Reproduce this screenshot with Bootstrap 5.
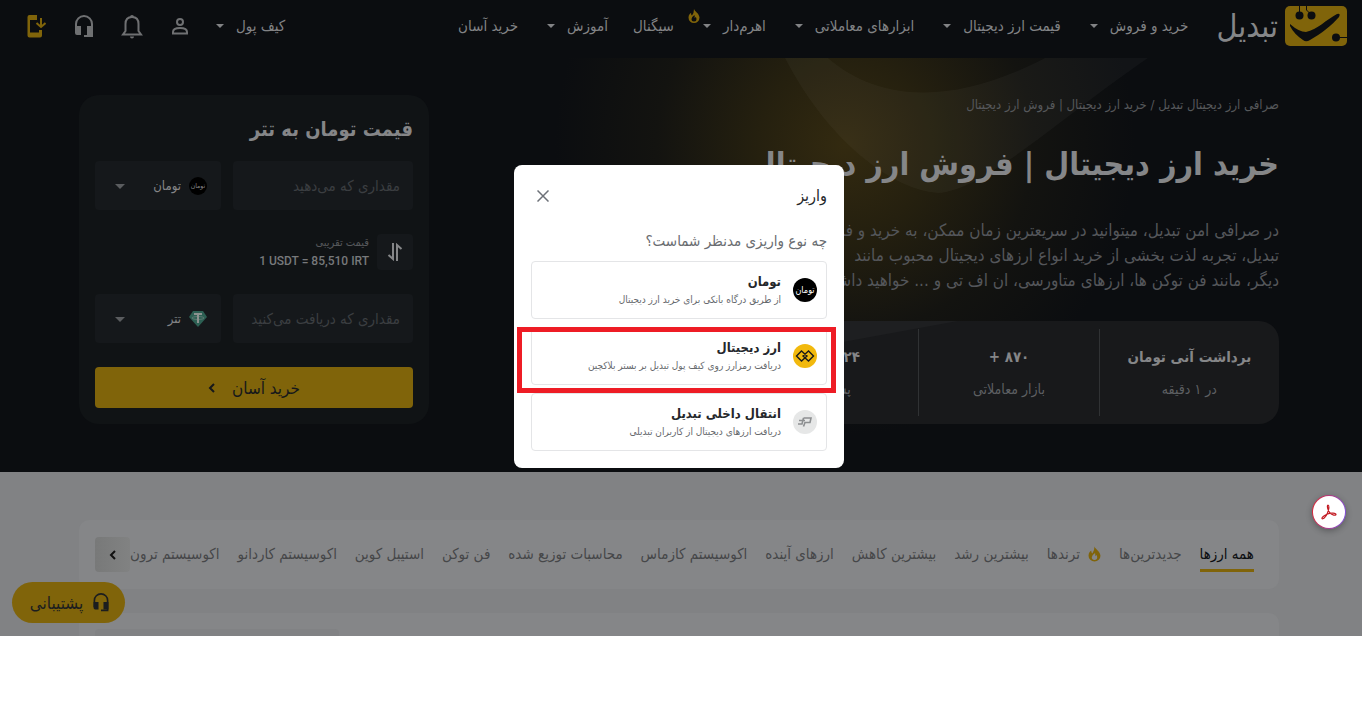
<!doctype html>
<html lang="fa" dir="rtl">
<head>
<meta charset="utf-8">
<meta name="viewport" content="width=device-width, initial-scale=1">
<title>تبدیل</title>
<link href="https://cdn.jsdelivr.net/npm/bootstrap@5.3.0/dist/css/bootstrap.min.css" rel="stylesheet">
<style>
:root{--gold:#80640a;--ink:#0b0d10}
body{font-family:"DejaVu Sans Condensed","DejaVu Sans",Roboto,sans-serif;background:#fff;font-size:15px;line-height:24px}
button,input,select{font-family:inherit}
a{text-decoration:none;color:inherit}
svg{display:block;flex:none}
.stage{background:#818284;overflow:hidden}
.wrap{max-width:1200px;margin:0 auto}
.topbar{background:var(--ink);color:#828385;height:58px;padding:0 15px 6px 24px}
.brand-word{font-size:32px;line-height:40px;color:#858688;margin-right:7px}
.main-menu{margin-right:28px}
.main-menu li{margin-left:29px}
.main-menu .no-caret{margin-left:25px}
.menu-link{display:flex;align-items:center;gap:12px;position:relative;white-space:nowrap}
.caret{width:0;height:0;border:4px solid transparent;border-top-color:currentColor;border-bottom:0}
.flame-tag{position:absolute;left:-15px;top:-5px}
.tool{color:#6f7072;background:none;border:0;padding:0;width:24px;display:flex;justify-content:center}
.tools{gap:24px}
.hero{background:var(--ink);padding:37px 4px 48px 0;isolation:isolate}
.art{position:absolute;top:0;right:0;z-index:-1}
.crumbs{font-size:13px;line-height:20px;color:#56585b}
.headline{font-size:32px;line-height:50px;font-weight:700;color:#858688;margin:24px 0 29px}
.intro{font-size:17px;line-height:25px;color:#54565a;margin:0 0 28px}
.stats{background:#18191b;border-radius:20px;padding:8px 0;width:540px;color:#858688;overflow:hidden;isolation:isolate}
.stat{height:87px;border-left:1px solid #303234;text-align:center;padding-top:16px;flex:1 0 0}
.stat:last-child{border-left:0}
.stat strong{display:block;font-size:15px;margin-bottom:8px}
.stat span{font-size:14px;color:#5e6063}
.trade{width:350px;background:#101315;border-radius:20px;padding:20px 16px 16px;color:#858688}
.trade h2{font-size:20px;line-height:28px;font-weight:700;margin:0 0 18px}
.trade input,.trade select{height:49px;border:0;border-radius:4px;background:#15181b;color:#858688;font-size:15px;width:100%}
.trade input{padding:0 13px}
.trade input::placeholder{color:#3b3e41;opacity:1}
.coin-pick{width:126px;position:relative;flex:none}
.coin-pick select{appearance:none;padding:0 40px 0 30px;font-size:13px}
.coin-mark{position:absolute;right:14px;top:16px;width:18px;height:18px}
.coin-pick .caret{position:absolute;left:20px;top:23px;border-width:5px;border-bottom:0;color:#5a5c5f}
.swap{width:36px;height:36px;border:0;border-radius:4px;background:#15181b;color:#858688;padding:0}
.rate small{font-size:11px;color:#56585b;line-height:18px}
.rate span{font:500 12px/18px Roboto,sans-serif;color:#77797b}
.buy{height:41px;background:var(--gold);color:#16181a;border:0;border-radius:4px;font-size:17px}
.panel{background:#858688}
.lower{padding:48px 4px 0 0;color:#464749}
.tabs-panel{border-radius:10px;padding:16px 25px 16px 16px;height:69px;font-size:15px}
.tab{border:0;background:none;color:inherit;padding:5px 0 3px;line-height:24px;border-bottom:3px solid transparent;white-space:nowrap;height:35px}
.tab.on{color:#0d0f11;border-color:var(--gold)}
.more{width:35px;height:35px;border:0;border-radius:4px;background:linear-gradient(90deg,#787979,#818282);color:#111;padding:0}
.list-panel{border-radius:10px 10px 0 0;height:23px;margin-top:24px;padding:16px 16px 0}
.search-box{width:244px;height:7px;background:#818284;border-radius:4px 4px 0 0}
.support{position:absolute;left:12px;bottom:13px;width:113px;height:41px;border:0;border-radius:21px;background:var(--gold);color:#1b1d1f;font-size:17px;gap:10px;padding:0 12px 0 14px}
.pdf{position:absolute;right:16px;top:495px;width:34px;height:34px;border:1px solid transparent;border-radius:50%;padding:0;background:linear-gradient(#fff,#fff) padding-box,linear-gradient(100deg,#e0232b,#7b52e8) border-box;box-shadow:0 2px 6px rgba(0,0,0,.3)}
.shade{padding:0 4px 3px 0}
.deposit{width:330px;background:#fff;border-radius:8px;padding:16px 17px 17px;color:#25272b}
.deposit h2{font-size:16px;line-height:30px;margin:0;font-weight:500}
.deposit .ask{color:#6a6d71;font-size:15px;line-height:24px;margin:18px 0 8px}
.close-x{border:0;background:none;color:#6d7178;padding:0;width:24px;height:26px}
.choice{height:58px;border:1px solid #e4e5e7;border-radius:4px;background:none;padding:0 9px;gap:12px;color:inherit;position:relative;text-align:right}
.choice b{display:block;font-size:13px;line-height:20px}
.choice span{display:block;font-size:10px;line-height:16px;color:#66696d}
.choice.marked::after{content:"";position:absolute;top:-1px;bottom:-9px;right:-10px;left:-15px;border:5px solid #ee1c25}
</style>
</head>
<body>
<div class="stage position-relative">
  <header class="topbar d-flex align-items-center justify-content-between">
    <div class="d-flex align-items-center">
      <a href="#" class="d-flex align-items-center">
        <svg width="62" height="40" viewBox="0 0 62 40"><rect width="62" height="40" rx="5" fill="#80640a"/><g fill="#0b0d10"><circle cx="14.500" cy="9.500" r="4"/><circle cx="26.500" cy="9.500" r="4"/><circle cx="51" cy="31.500" r="4"/><path d="M5 18Q14 26 21 26C32 24 42 13 52 8Q56 7 54 11C47 19 36 28 25 34Q21 36.500 18 34Q9 28 5 20Z"/></g><path d="M14.500 0v8M21.500 0v4l5 5M51 31.500h11" stroke="#0b0d10" fill="none"/></svg>
        <span class="brand-word">تبدیل</span>
      </a>
      <ul class="main-menu list-unstyled d-flex align-items-center mb-0 p-0">
        <li><a class="menu-link" href="#">خرید و فروش<i class="caret"></i></a></li>
        <li><a class="menu-link" href="#">قیمت ارز دیجیتال<i class="caret"></i></a></li>
        <li><a class="menu-link" href="#">ابزارهای معاملاتی<i class="caret"></i></a></li>
        <li><a class="menu-link" href="#">اهرم‌دار<i class="caret"></i><svg class="flame-tag" width="12" height="14" viewBox="0 0 12 14"><path fill="#80640a" fill-rule="evenodd" d="M6 0C7 3 11 4 11.500 8.500A5.500 5.500 0 0 1 .5 8.500C.5 6 2 4.500 3 4Q3 6 4 6.500Q6 4 6 0ZM6.500 6Q3.500 8 3.500 10A2.500 2.500 0 0 0 8.500 10Q8.500 8.500 7.500 8Q7 9 6.500 9Q7 7.500 6.500 6Z"/></svg></a></li>
        <li class="no-caret"><a class="menu-link" href="#">سیگنال</a></li>
        <li><a class="menu-link" href="#">آموزش<i class="caret"></i></a></li>
        <li><a class="menu-link" href="#">خرید آسان</a></li>
      </ul>
    </div>
    <div class="d-flex align-items-center tools">
      <a class="menu-link" href="#">کیف پول<i class="caret"></i></a>
      <div class="d-flex align-items-center tools">
      <button class="tool" aria-label="حساب کاربری"><svg width="18" height="18" viewBox="0 0 18 18" fill="none" stroke="currentColor" stroke-width="2"><circle cx="9" cy="5" r="3"/><path d="M2 16.500v-1.500c0-3 4-4 7-4s7 1 7 4v1.500Z"/></svg></button>
      <button class="tool" aria-label="اعلان‌ها"><svg width="22" height="25" viewBox="0 0 22 25"><path d="M11 3C6.500 3 4.500 6 4.500 10v7L2 20.500h18L17.500 17v-7C17.500 6 15.500 3 11 3Z" fill="none" stroke="currentColor" stroke-width="2"/><path d="M9 3a2 2 0 1 1 4 0ZM9 22.500h4a2 2 0 0 1-4 0Z" fill="currentColor"/></svg></button>
      <button class="tool" aria-label="پشتیبانی"><svg width="18" height="23" viewBox="0 0 18 23"><path d="M1 17v-8a8 8 0 0 1 16 0v12H9" fill="none" stroke="currentColor" stroke-width="2"/><path d="M0 11h6v9H2q-2 0-2-2ZM12 11h6v9h-6Z" fill="currentColor"/></svg></button>
      <button class="tool" aria-label="دانلود اپلیکیشن"><svg width="19" height="23" viewBox="0 0 19 23"><path d="M10 0v5H3v12.500h9V15h3v5.500q0 2-2 2H2.500q-2 0-2-2V2q0-2 2-2Z" fill="#80640a"/><path d="M14 3v9M9.500 8l4.500 4L18.500 8" fill="none" stroke="#80640a" stroke-width="2"/></svg></button>
      </div>
    </div>
  </header>

  <section class="hero position-relative overflow-hidden">
    <svg class="art" width="862" height="414" viewBox="500 58 862 414">
      <defs><radialGradient id="glow" gradientUnits="userSpaceOnUse" cx="845" cy="145" r="290"><stop offset="0" stop-color="#332a10"/><stop offset=".3" stop-color="#25200f"/><stop offset=".65" stop-color="#131310"/><stop offset="1" stop-color="#0b0d10"/></radialGradient></defs>
      <rect x="500" y="58" width="862" height="414" fill="url(#glow)"/>
      <path d="M785 58C830 145 895 190 938 193C985 190 1055 122 1148 58H1045C955 105 880 103 828 58Z" fill="#fff" fill-opacity=".03"/>
    </svg>
    <div class="wrap d-flex align-items-start justify-content-between">
      <div>
        <nav class="crumbs"><a href="#">صرافی ارز دیجیتال تبدیل</a> / خرید ارز دیجیتال | فروش ارز دیجیتال</nav>
        <h1 class="headline">خرید ارز دیجیتال | فروش ارز دیجیتال</h1>
        <p class="intro">در صرافی امن تبدیل، میتوانید در سریعترین زمان ممکن، به خرید و فروش<br>تبدیل، تجربه لذت بخشی از خرید انواع ارزهای دیجیتال محبوب مانند<br>دیگر، مانند فن توکن ها، ارزهای متاورسی، ان اف تی و ... خواهید داشت.</p>
        <div class="stats d-flex position-relative">
          <svg class="art" width="540" height="103"><path d="M0 0H219L0 40Z" fill="#1e1f21"/></svg>
          <div class="stat"><strong>برداشت آنی تومان</strong><span>در ۱ دقیقه</span></div>
          <div class="stat"><strong>۸۷۰ +</strong><span>بازار معاملاتی</span></div>
          <div class="stat"><strong>۲۴ ساعته</strong><span>پشتیبانی</span></div>
        </div>
      </div>
      <form class="trade">
        <h2>قیمت تومان به تتر</h2>
        <div class="d-flex mb-4 gap-2">
          <div class="flex-grow-1 ms-1"><input type="text" aria-label="مقدار پرداختی" placeholder="مقداری که می‌دهید"></div>
          <div class="coin-pick"><select aria-label="ارز پرداختی"><option>تومان</option></select><svg class="coin-mark" viewBox="0 0 24 24"><circle cx="12" cy="12" r="12" fill="#000"/><text x="12" y="15" text-anchor="middle" font-size="9" fill="#858688">تومان</text></svg><i class="caret"></i></div>
        </div>
        <div class="d-flex align-items-center gap-2 mb-4">
          <button type="button" class="swap d-flex align-items-center justify-content-center" aria-label="جابجایی"><svg width="16" height="18" viewBox="0 0 16 18" fill="none" stroke="currentColor" stroke-width="2"><path d="M6 0v16L1.500 12M10 18V2l4.500 4"/></svg></button>
          <div class="rate d-flex flex-column"><small>قیمت تقریبی</small><span dir="ltr">1 USDT = 85,510 IRT</span></div>
        </div>
        <div class="d-flex mb-4 gap-2">
          <div class="flex-grow-1 ms-1"><input type="text" aria-label="مقدار دریافتی" placeholder="مقداری که دریافت می‌کنید"></div>
          <div class="coin-pick"><select aria-label="ارز دریافتی"><option>تتر</option></select><svg class="coin-mark" viewBox="0 0 18 18"><path d="M4 1h10l4 6-9 10L0 7Z" fill="#2c5f53"/><path d="M5 4h8M9 4v9" stroke="#8b918f" stroke-width="2"/><ellipse cx="9" cy="8" rx="6" ry="1.500" fill="none" stroke="#8b918f" stroke-width=".5"/></svg><i class="caret"></i></div>
        </div>
        <button type="button" class="buy w-100 d-flex align-items-center justify-content-center gap-3">خرید آسان<svg width="8" height="10" viewBox="0 0 8 10"><path d="M6 1 2 5l4 4" fill="none" stroke="currentColor" stroke-width="2"/></svg></button>
      </form>
    </div>
  </section>

  <section class="lower">
    <div class="wrap">
      <div class="panel tabs-panel d-flex align-items-center">
        <div class="d-flex flex-grow-1 justify-content-between" role="tablist">
          <button class="tab on" role="tab">همه ارزها</button>
          <button class="tab" role="tab">جدیدترین‌ها</button>
          <button class="tab d-flex align-items-center gap-2" role="tab"><svg width="13" height="16" viewBox="0 0 12 14"><path fill="#80640a" fill-rule="evenodd" d="M6 0C7 3 11 4 11.500 8.500A5.500 5.500 0 0 1 .5 8.500C.5 6 2 4.500 3 4Q3 6 4 6.500Q6 4 6 0ZM6.500 6Q3.500 8 3.500 10A2.500 2.500 0 0 0 8.500 10Q8.500 8.500 7.500 8Q7 9 6.500 9Q7 7.500 6.500 6Z"/></svg>ترندها</button>
          <button class="tab" role="tab">بیشترین رشد</button>
          <button class="tab" role="tab">بیشترین کاهش</button>
          <button class="tab" role="tab">ارزهای آینده</button>
          <button class="tab" role="tab">اکوسیستم کازماس</button>
          <button class="tab" role="tab">محاسبات توزیع شده</button>
          <button class="tab" role="tab">فن توکن</button>
          <button class="tab" role="tab">استیبل کوین</button>
          <button class="tab" role="tab">اکوسیستم کاردانو</button>
          <button class="tab" role="tab">اکوسیستم ترون</button>
        </div>
        <button class="more d-flex align-items-center justify-content-center" aria-label="بیشتر"><svg width="8" height="10" viewBox="0 0 8 10"><path d="M6 1 2 5l4 4" fill="none" stroke="currentColor" stroke-width="2"/></svg></button>
      </div>
      <div class="panel list-panel d-flex justify-content-end"><div class="search-box"></div></div>
    </div>
  </section>

  <button class="support d-flex align-items-center justify-content-center"><svg width="16" height="19" viewBox="0 0 18 23"><path d="M1 17v-8a8 8 0 0 1 16 0v12H9" fill="none" stroke="currentColor" stroke-width="2"/><path d="M0 11h6v9H2q-2 0-2-2ZM12 11h6v9h-6Z" fill="currentColor"/></svg>پشتیبانی</button>
  <button class="pdf d-flex align-items-center justify-content-center" aria-label="PDF"><svg width="16" height="16" viewBox="0 0 16 16" fill="none" stroke="#c21a22" stroke-width="1.200"><path d="M7 1C5.500 1 7 7 9 9s6 3 6 1.500S10 8.500 6.500 10 .5 13.500 1 14.500 4.500 14 6.500 9 8 1 7 1Z"/></svg></button>

  <div class="shade position-absolute top-0 start-0 w-100 h-100 d-flex align-items-center justify-content-center">
    <div class="deposit" role="dialog" aria-label="واریز">
      <div class="d-flex align-items-center justify-content-between">
        <h2>واریز</h2>
        <button class="close-x d-flex align-items-center justify-content-center" aria-label="بستن"><svg width="12" height="12" viewBox="0 0 12 12"><path d="m.500.500 11 11m0-11-11 11" stroke="currentColor" stroke-width="1.500"/></svg></button>
      </div>
      <p class="ask">چه نوع واریزی مدنظر شماست؟</p>
      <div class="d-grid gap-2">
        <button class="choice d-flex align-items-center"><svg width="24" height="24" viewBox="0 0 24 24"><circle cx="12" cy="12" r="12" fill="#000"/><text x="12" y="15" text-anchor="middle" font-size="9" fill="#fff">تومان</text></svg><div><b>تومان</b><span>از طریق درگاه بانکی برای خرید ارز دیجیتال</span></div></button>
        <button class="choice marked d-flex align-items-center"><svg width="24" height="24" viewBox="0 0 24 24"><circle cx="12" cy="12" r="12" fill="#f2b90d"/><path d="M8.500 7 14 12l-5.500 5L3.500 12ZM15.500 7 10 12l5.500 5L20.500 12Z" fill="none" stroke="#1a1a1a" stroke-width="1.400"/></svg><div><b>ارز دیجیتال</b><span>دریافت رمزارز روی کیف پول تبدیل بر بستر بلاکچین</span></div></button>
        <button class="choice d-flex align-items-center"><svg width="24" height="24" viewBox="0 0 24 24"><circle cx="12" cy="12" r="12" fill="#e6e7e7"/><path d="M5 14h4L10.500 8M6 10.500h6M10.500 8H18L17 12.500H12L10.500 16.500" fill="none" stroke="#8d8f91" stroke-width="1.600"/></svg><div><b>انتقال داخلی تبدیل</b><span>دریافت ارزهای دیجیتال از کاربران تبدیلی</span></div></button>
      </div>
    </div>
  </div>
</div>
<script src="https://cdn.jsdelivr.net/npm/bootstrap@5.3.0/dist/js/bootstrap.bundle.min.js"></script>
</body>
</html>
